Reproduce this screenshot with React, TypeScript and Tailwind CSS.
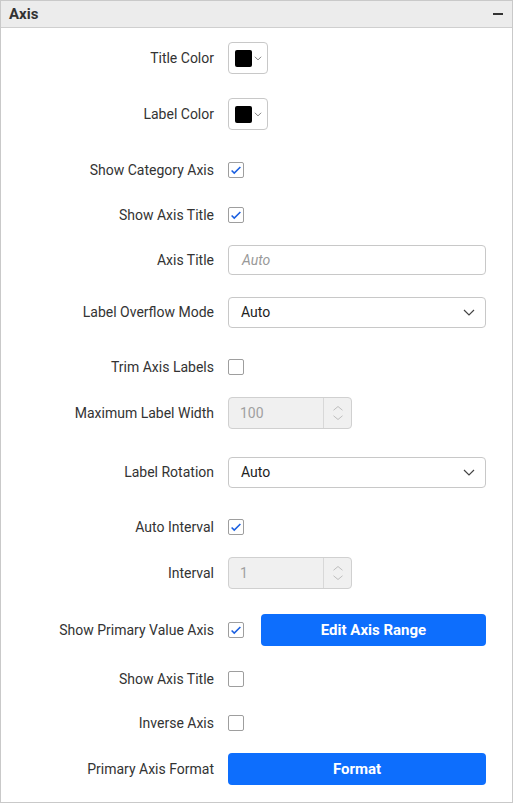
import React from "react";

const Chevron = ({ className = "" }: { className?: string }) => (
  <svg viewBox="0 0 16 16" className={className} fill="none" stroke="currentColor" strokeWidth="1.2">
    <path d="M3 6l5 5 5-5" />
  </svg>
);

const Check = ({ on }: { on: boolean }) => (
  <div className="w-[16px] h-[16px] border border-[#9e9e9e] rounded-[2px] bg-white flex items-center justify-center">
    {on && (
      <svg viewBox="0 0 16 16" className="w-[14px] h-[14px]" fill="none" stroke="#1a5fe0" strokeWidth="1.8">
        <path d="M3 8.5l3 3 7-7" />
      </svg>
    )}
  </div>
);

const ColorPick = () => (
  <div className="w-[40px] h-[32px] border border-[#c8c8c8] rounded-[4px] bg-white flex items-center pl-[6px] gap-[1px]">
    <div className="w-[17px] h-[17px] bg-black rounded-[2px]" />
    <Chevron className="w-[10px] h-[10px] text-[#555]" />
  </div>
);

const Select = ({ value }: { value: string }) => (
  <div className="w-[258px] h-[31px] border border-[#c8c8c8] rounded-[4px] bg-white flex items-center justify-between pl-[12px] pr-[8px] text-[#222]">
    <span>{value}</span>
    <Chevron className="w-[16px] h-[16px] text-[#444]" />
  </div>
);

const Num = ({ value }: { value: string }) => (
  <div className="w-[124px] h-[32px] border border-[#d0d0d0] rounded-[4px] bg-[#f0f0f0] flex items-center text-[#a0a0a0]">
    <span className="flex-1 pl-[11px]">{value}</span>
    <div className="w-[28px] h-full border-l border-[#d8d8d8] flex flex-col items-center justify-center text-[#b8b8b8]">
      <svg viewBox="0 0 16 8" className="w-[12px] h-[6px]" fill="none" stroke="currentColor" strokeWidth="1.2"><path d="M2 7l6-5 6 5" /></svg>
      <svg viewBox="0 0 16 8" className="w-[12px] h-[6px] mt-[4px]" fill="none" stroke="currentColor" strokeWidth="1.2"><path d="M2 1l6 5 6-5" /></svg>
    </div>
  </div>
);

const Btn = ({ label, w }: { label: string; w: string }) => (
  <div className={`${w} h-[32px] rounded-[4px] bg-[#0d6efd] text-white font-bold text-[15px] flex items-center justify-center`}>{label}</div>
);

const Row = ({ label, h, children }: { label: string; h: string; children: React.ReactNode }) => (
  <div className={`flex items-center ${h}`}>
    <div className="w-[213px] text-right text-[#333]">{label}</div>
    <div className="ml-[14px] flex items-center">{children}</div>
  </div>
);

export default function App() {
  return (
    <div className="w-[513px] h-[803px] bg-white border border-[#c9c9c9] text-[14px]" style={{ fontFamily: "Roboto, 'Liberation Sans', sans-serif" }}>
      <div className="h-[27px] bg-[#ececec] border-b border-[#cfcfcf] flex items-center justify-between px-[8px]">
        <span className="font-bold text-[#333] text-[15px]">Axis</span>
        <div className="w-[10px] h-[1.5px] bg-[#333] mr-[1px]" />
      </div>
      <Row label="Title Color" h="h-[60px]"><ColorPick /></Row>
      <Row label="Label Color" h="h-[52px]"><ColorPick /></Row>
      <Row label="Show Category Axis" h="h-[60px]"><Check on /></Row>
      <Row label="Show Axis Title" h="h-[30px]"><Check on /></Row>
      <Row label="Axis Title" h="h-[60px]">
        <div className="w-[258px] h-[30px] border border-[#c8c8c8] rounded-[4px] bg-white flex items-center pl-[13px] italic text-[#999]">Auto</div>
      </Row>
      <Row label="Label Overflow Mode" h="h-[44px]"><Select value="Auto" /></Row>
      <Row label="Trim Axis Labels" h="h-[66px]"><Check on={false} /></Row>
      <Row label="Maximum Label Width" h="h-[26px]"><Num value="100" /></Row>
      <Row label="Label Rotation" h="h-[92px]"><Select value="Auto" /></Row>
      <Row label="Auto Interval" h="h-[18px]"><Check on /></Row>
      <Row label="Interval" h="h-[74px]"><Num value="1" /></Row>
      <Row label="Show Primary Value Axis" h="h-[40px]">
        <Check on />
        <div className="ml-[17px]"><Btn label="Edit Axis Range" w="w-[225px]" /></div>
      </Row>
      <Row label="Show Axis Title" h="h-[58px]"><Check on={false} /></Row>
      <Row label="Inverse Axis" h="h-[30px]"><Check on={false} /></Row>
      <Row label="Primary Axis Format" h="h-[62px]"><Btn label="Format" w="w-[258px]" /></Row>
    </div>
  );
}
